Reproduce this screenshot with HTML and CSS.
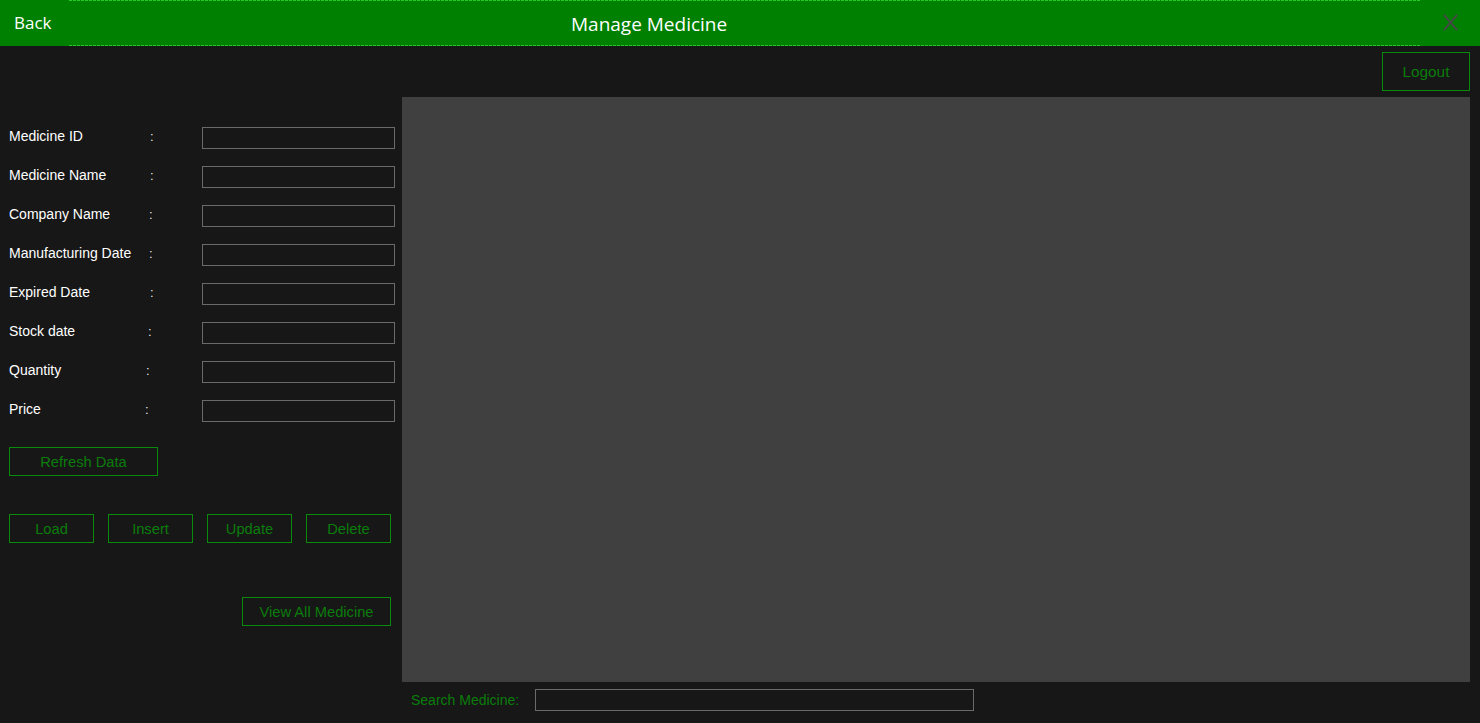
FILE: index.html
```html
<!DOCTYPE html>
<html>
<head>
<meta charset="utf-8">
<title>Manage Medicine</title>
<link rel="stylesheet" href="styles.css">
</head>
<body>
<header class="titlebar">
  <div class="back">Back</div>
  <div class="title-strip"><span class="title">Manage Medicine</span></div>
  <div class="close">
    <svg width="15" height="17" viewBox="0 0 15 17"><path d="M0.9 0.9 L14.1 16.1 M14.1 0.9 L0.9 16.1" stroke="#474747" stroke-width="1.9" fill="none"/></svg>
  </div>
</header>
<main class="main">
  <section class="form-col">
    <div class="fields">
      <div class="row"><span class="lbl">Medicine ID</span><span class="colon c1">:</span><span class="inp"></span></div>
      <div class="row"><span class="lbl">Medicine Name</span><span class="colon c1">:</span><span class="inp"></span></div>
      <div class="row"><span class="lbl">Company Name</span><span class="colon c2">:</span><span class="inp"></span></div>
      <div class="row"><span class="lbl">Manufacturing Date</span><span class="colon c2">:</span><span class="inp"></span></div>
      <div class="row"><span class="lbl">Expired Date</span><span class="colon c1">:</span><span class="inp"></span></div>
      <div class="row"><span class="lbl">Stock date</span><span class="colon c3">:</span><span class="inp"></span></div>
      <div class="row"><span class="lbl">Quantity</span><span class="colon c4">:</span><span class="inp"></span></div>
      <div class="row"><span class="lbl">Price</span><span class="colon c5">:</span><span class="inp"></span></div>
    </div>
    <div class="btn refresh">Refresh Data</div>
    <div class="actions">
      <div class="btn act">Load</div>
      <div class="btn act">Insert</div>
      <div class="btn act">Update</div>
      <div class="btn act">Delete</div>
    </div>
    <div class="view-row"><div class="btn view">View All Medicine</div></div>
  </section>
  <section class="grid-col">
    <div class="logout-row"><div class="btn logout">Logout</div></div>
    <div class="datagrid"></div>
    <div class="search-row"><span class="search-lbl">Search Medicine:</span><span class="search-inp"></span></div>
  </section>
</main>
</body>
</html>
```

FILE: styles.css
```css
html, body {
  margin: 0;
  padding: 0;
  background: #171717;
  width: 1480px;
  height: 723px;
  overflow: hidden;
  font-family: "Liberation Sans", Arial, sans-serif;
}
.titlebar {
  height: 46px;
  background: #008000;
  display: flex;
  align-items: stretch;
}
.back {
  width: 69px;
  box-sizing: border-box;
  padding-left: 14px;
  padding-top: 12px;
  color: #ffffff;
  font-family: "Open Sans", "Noto Sans", sans-serif;
  font-size: 17px;
  line-height: 22px;
}
.title-strip {
  width: 1352px;
  box-sizing: border-box;
  padding-left: 502px;
  padding-top: 11px;
  background:
    repeating-linear-gradient(90deg, #22cc22 0 3px, transparent 3px 4px) top left / 100% 1px no-repeat,
    repeating-linear-gradient(90deg, #22cc22 0 3px, transparent 3px 4px) bottom left / 100% 1px no-repeat;
}
.title {
  color: #ffffff;
  font-family: "Open Sans", "Noto Sans", sans-serif;
  font-size: 19px;
}
.close {
  flex: 1;
  display: flex;
  justify-content: flex-end;
  padding: 14px 22px 0 0;
}
.close svg {
  display: block;
}
.main {
  display: flex;
}
.form-col {
  width: 402px;
  box-sizing: border-box;
  padding: 81px 0 0 9px;
}
.fields {
  display: flex;
  flex-direction: column;
  gap: 17px;
}
.row {
  display: flex;
  align-items: center;
  height: 22px;
}
.lbl {
  width: 140px;
  color: #ffffff;
  font-size: 14px;
  margin-top: -4px;
}
.colon {
  width: 53px;
  color: #e6e6e6;
  font-size: 13px;
  margin-top: -4px;
}
.c1 { padding-left: 1px; width: 52px; }
.c2 { padding-left: 0; width: 53px; }
.c3 { margin-left: -1px; width: 54px; }
.c4 { margin-left: -3px; width: 56px; }
.c5 { margin-left: -4px; width: 57px; }
.inp {
  width: 193px;
  height: 22px;
  box-sizing: border-box;
  border: 1px solid #6a6a6a;
}
.btn {
  box-sizing: border-box;
  border: 1px solid #0a8a0a;
  color: #0b7d0b;
  font-size: 14.7px;
  height: 29px;
  display: flex;
  align-items: center;
  justify-content: center;
}
.refresh {
  width: 149px;
  margin-top: 25px;
}
.actions {
  display: flex;
  gap: 14px;
  margin-top: 38px;
}
.act {
  width: 85px;
}
.view-row {
  display: flex;
  justify-content: flex-end;
  width: 382px;
  margin-top: 54px;
}
.view {
  width: 149px;
}
.grid-col {
  width: 1068px;
  display: flex;
  flex-direction: column;
}
.logout-row {
  display: flex;
  justify-content: flex-end;
  padding-top: 6px;
}
.logout {
  width: 88px;
  height: 39px;
  font-size: 15.3px;
}
.datagrid {
  margin-top: 6px;
  height: 585px;
  background: #404040;
}
.search-row {
  display: flex;
  align-items: center;
  padding: 7px 0 0 9px;
}
.search-lbl {
  width: 124px;
  color: #0b7d0b;
  font-size: 14px;
}
.search-inp {
  width: 439px;
  height: 22px;
  box-sizing: border-box;
  border: 1px solid #6a6a6a;
}
```
